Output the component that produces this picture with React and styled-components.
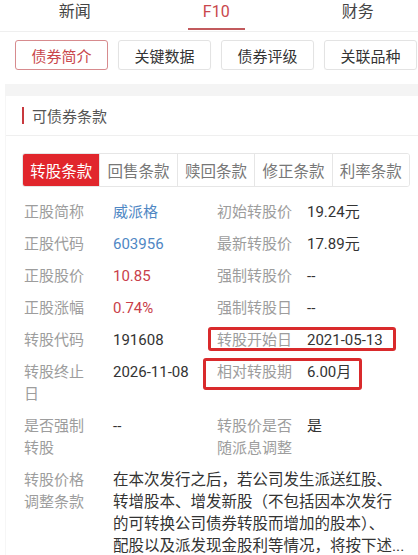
import React from 'react'
import styled, {createGlobalStyle} from 'styled-components'

const GlobalStyle = createGlobalStyle`
  body {
    margin: 0;
    background: #fff;
    font-family: Roboto, "Noto Sans CJK SC", sans-serif;
    color: #333;
  }
`

const Page = styled.div`
  width: 418px;
  height: 555px;
  overflow: hidden;
  background: #fff;
`

const TopTabs = styled.div`
  display: grid;
  grid-template-columns: repeat(3, 141.5px);
  padding-left: 4px;
  height: 31px;
  border-bottom: 1px solid #efefef;
  overflow: hidden;
`

const TopTab = styled.div`
  position: relative;
  text-align: center;
  font-size: 16px;
  line-height: 24px;
  color: ${props => props.$active ? '#c9474c' : '#444'};

  &::after {
    content: '';
    display: ${props => props.$active ? 'block' : 'none'};
    position: absolute;
    left: 50%;
    bottom: 1px;
    width: 57px;
    height: 2px;
    margin-left: -28px;
    background: #c25a5d;
  }
`

const SubTabs = styled.div`
  display: flex;
  gap: 10px;
  padding: 0 15px;
  margin-top: 8px;
  overflow: hidden;
`

const SubTab = styled.div`
  flex-shrink: 0;
  width: 93px;
  height: 30px;
  box-sizing: border-box;
  display: flex;
  justify-content: center;
  align-items: center;
  font-size: 15px;
  border: 1px solid ${props => props.$active ? '#d78b8e' : '#e3e3e3'};
  border-radius: 3px;
  color: ${props => props.$active ? '#c9474c' : '#333'};
  box-shadow: 0 1px 1px rgba(0, 0, 0, 0.04);
`

const Band = styled.div`
  height: 12px;
  margin: 14px 0 0 5px;
  background: #f4f4f4;
`

const Card = styled.div`
  margin-left: 5px;
  border-left: 1px solid #f6f6f6;
  padding-bottom: 20px;
`

const SectionTitle = styled.div`
  display: flex;
  align-items: center;
  gap: 8px;
  height: 39px;
  padding-left: 16px;
  border-bottom: 1px solid #efefef;
  font-size: 15px;
  color: #555;

  &::before {
    content: '';
    width: 2px;
    height: 17px;
    background: #c8393e;
  }
`

const Tabs = styled.div`
  display: flex;
  height: 34px;
  margin: 17px 8px 0 16px;
  border: 1px solid #e6e6e6;
  border-radius: 3px;
  box-sizing: border-box;
  overflow: hidden;
`

const Tab = styled.div`
  flex: 1;
  display: flex;
  justify-content: center;
  align-items: center;
  font-size: 15.5px;
  color: ${props => props.$active ? '#fff' : '#777'};
  background: ${props => props.$active ? '#e1262c' : '#fff'};
  & + & {
    border-left: 1px solid #e6e6e6;
  }
`

const Rows = styled.div`
  margin-top: 9px;
  padding-left: 18px;
`

const Row = styled.div`
  display: flex;
  align-items: flex-start;
  padding: 5px 0;
  margin-top: ${props => props.$gap || 0}px;
  font-size: 15px;
  line-height: 22px;
`

const Label = styled.div`
  flex-shrink: 0;
  width: 62px;
  margin-right: 27px;
  color: #9d9d9d;
`

const Value = styled.div`
  flex-shrink: 0;
  width: 104px;
  color: ${props => props.$tone === 'blue' ? '#4f87c4' : props.$tone === 'red' ? '#c9404a' : '#333'};
`

const Pair = styled.div`
  position: relative;
  display: flex;
  flex: 1;
`

const RightLabel = styled.div`
  flex-shrink: 0;
  width: 78px;
  margin-right: 12px;
  color: #9d9d9d;
`

const RightValue = styled.div`
  color: #333;
`

const Mark = styled.div`
  position: absolute;
  left: ${props => props.$left}px;
  top: ${props => props.$top}px;
  width: ${props => props.$w}px;
  height: ${props => props.$h}px;
  box-sizing: border-box;
  border: 3px solid #d92a2c;
  border-radius: 3px;
`

const LongText = styled.div`
  font-size: 15.5px;
  color: #333;
  white-space: nowrap;

  span {
    display: block;
  }
`

const rows = [
    {label: '正股简称', value: '威派格', tone: 'blue', rl: '初始转股价', rv: '19.24元'},
    {label: '正股代码', value: '603956', tone: 'blue', rl: '最新转股价', rv: '17.89元'},
    {label: '正股股价', value: '10.85', tone: 'red', rl: '强制转股价', rv: '--'},
    {label: '正股涨幅', value: '0.74%', tone: 'red', rl: '强制转股日', rv: '--'},
    {label: '转股代码', value: '191608', rl: '转股开始日', rv: '2021-05-13', mark: {left: -9, top: -2, w: 188, h: 24}},
    {label: '转股终止日', value: '2026-11-08', rl: '相对转股期', rv: '6.00月', mark: {left: -14, top: -3, w: 159, h: 32}},
    {label: '是否强制转股', value: '--', rl: '转股价是否随派息调整', rv: '是'},
]

const clause = [
    '在本次发行之后，若公司发生派送红股、',
    '转增股本、增发新股（不包括因本次发行',
    '的可转换公司债券转股而增加的股本）、',
    '配股以及派发现金股利等情况，将按下述...',
]

const App = () => {
    return (
        <Page>
            <GlobalStyle/>
            <TopTabs>
                <TopTab>新闻</TopTab>
                <TopTab $active>F10</TopTab>
                <TopTab>财务</TopTab>
            </TopTabs>
            <SubTabs>
                <SubTab $active>债券简介</SubTab>
                <SubTab>关键数据</SubTab>
                <SubTab>债券评级</SubTab>
                <SubTab>关联品种</SubTab>
            </SubTabs>
            <Band/>
            <Card>
                <SectionTitle>可债券条款</SectionTitle>
                <Tabs>
                    <Tab $active>转股条款</Tab>
                    <Tab>回售条款</Tab>
                    <Tab>赎回条款</Tab>
                    <Tab>修正条款</Tab>
                    <Tab>利率条款</Tab>
                </Tabs>
                <Rows>
                    {rows.map(r => (
                        <Row key={r.label}>
                            <Label>{r.label}</Label>
                            <Value $tone={r.tone}>{r.value}</Value>
                            <Pair>
                                <RightLabel>{r.rl}</RightLabel>
                                <RightValue>{r.rv}</RightValue>
                                {r.mark && (
                                    <Mark $left={r.mark.left} $top={r.mark.top} $w={r.mark.w} $h={r.mark.h}/>
                                )}
                            </Pair>
                        </Row>
                    ))}
                    <Row>
                        <Label>转股价格调整条款</Label>
                        <LongText>
                            {clause.map(line => <span key={line}>{line}</span>)}
                        </LongText>
                    </Row>
                </Rows>
            </Card>
        </Page>
    )
}

export default App
